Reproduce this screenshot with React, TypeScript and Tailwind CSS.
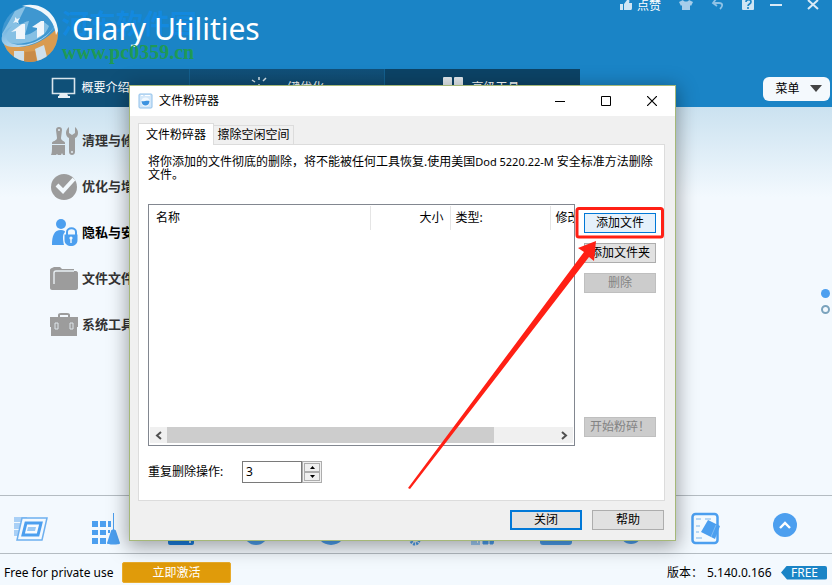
import React from 'react';

const navTabs = [
  { label: '概要介绍', icon: 'monitor' },
  { label: '一键优化', icon: 'sun' },
  { label: '高级工具', icon: 'grid' },
];

const categories = [
  { label: '清理与修复', icon: 'brush', active: false },
  { label: '优化与增强', icon: 'check', active: false },
  { label: '隐私与安全', icon: 'privacy', active: true },
  { label: '文件文件夹', icon: 'folder', active: false },
  { label: '系统工具', icon: 'case', active: false },
];

const shortcuts = [
  { label: '启动管理', icon: 'startup' },
  { label: '注册表清理', icon: 'broom' },
  { label: '磁盘清理', icon: 'drive' },
  { label: '磁盘分析', icon: 'disc' },
  { label: '快捷方式', icon: 'bigdisc' },
  { label: '进程管理', icon: 'gear' },
  { label: '内存优化', icon: 'memory' },
  { label: '驱动管理', icon: 'tray' },
  { label: '文件恢复', icon: 'smalldisc' },
  { label: '痕迹清除', icon: 'eraser' },
];

const Logo: React.FC = () => (
  <svg width="60" height="64" viewBox="0 0 60 64" aria-hidden="true">
    <defs>
      <linearGradient id="logoRing" x1="0" y1="0" x2="1" y2="1">
        <stop offset="0" stopColor="#5ba9dc" />
        <stop offset="1" stopColor="#e8f2fa" />
      </linearGradient>
      <clipPath id="logoClip">
        <circle cx="30" cy="34" r="28" />
      </clipPath>
    </defs>
    <g clipPath="url(#logoClip)">
      <rect width="60" height="64" fill="#3f97d0" />
      <path d="M0 42C20 52 42 46 60 25V64H0z" fill="#d99b50" />
      <path d="M2 34L15 11l11-5-9 18c6 1 8-3 12-3l-4 14c8-1 14-7 19-13l5 4c-5 15-27 21-47 16z" fill="#86c0e4" />
      <path d="M11 32l11-8h3v15H16v-8zM32 27l9-6h3v13l-7 4V28z" fill="#f0f6fb" />
      <path d="M14 51h10v15H14zM35 49l9-4 3 12-9 7z" fill="#cfe0ec" />
      <path d="M25 52l10-1 2 12H24z" fill="#c98b48" />
    </g>
    <path d="M22 6C40 1 57 13 58 31l-2 4C54 18 42 8 22 6z" fill="#f1f7fb" />
    <path d="M12 26C-2 34-2 46 13 47c18 1 37-9 43-24-6 14-26 25-42 21C4 42 4 34 12 26z" fill="url(#logoRing)" />
    <path d="M15 17l2 2 3-1-2 3 1 3-3-2-3 1 2-3z" fill="#e9f4fb" />
  </svg>
);

const NavIcon: React.FC<{ name: string }> = ({ name }) => (
  <svg width="26" height="24" viewBox="0 0 26 24" fill="none" className="shrink-0" aria-hidden="true">
    {name === 'monitor' && (
      <>
        <path d="M1.500 2.500h22v15h-22z" stroke="#d9e5ec" strokeWidth="1.600" />
        <path d="M9 17h7l1 3H8z" fill="#e8eff4" />
        <path d="M7 21h12" stroke="#e8eff4" strokeWidth="2" />
      </>
    )}
    {name === 'sun' && (
      <path
        d="M13 1v3M20 2l-3 3M6 4l3 2M13 8v8M1 11h4M21 11h4M5 19l3-3M21 19l-3-3"
        stroke="#d9e5ec"
        strokeWidth="1.500"
      />
    )}
    {name === 'grid' && (
      <g fill="#e2e9ed">
        <rect x="2" y="1" width="9" height="10" rx="1" />
        <rect x="13" y="1" width="9" height="10" rx="1" />
        <rect x="2" y="13" width="9" height="10" rx="1" />
        <rect x="13" y="13" width="9" height="10" rx="1" />
      </g>
    )}
  </svg>
);

const CategoryIcon: React.FC<{ name: string }> = ({ name }) => (
  <svg width="28" height="30" viewBox="0 0 28 30" className="shrink-0" aria-hidden="true">
    {name === 'brush' && (
      <g fill="#9c9c9c">
        <path d="M9 1c2 0 3 1 3 3l-1 8c0 3 4 3 4 5v1H2v-1c0-2 5-2 5-5L6 4c0-2 1-3 3-3z" />
        <path d="M2 19h13v10h-2l-1-2-1 2H8l-1-1-1 1H1c1-2 1-5 1-10z" />
        <circle cx="9" cy="4" r="1" fill="#e3edf3" />
        <path d="M19 1v6l3 2 3-2V1c4 3 4 9 0 11v14c0 4-6 4-6 0V12c-4-2-4-8 0-11z" />
        <circle cx="22" cy="26" r="1" fill="#e3edf3" />
      </g>
    )}
    {name === 'check' && (
      <>
        <circle cx="14" cy="15" r="13" fill="#9c9c9c" />
        <path d="M7 13l6 6L24 7" fill="none" stroke="#f3f9fd" strokeWidth="4" />
      </>
    )}
    {name === 'privacy' && (
      <g fill="#4c9fef">
        <circle cx="11" cy="6" r="5" />
        <path d="M2 27c0-9 2-15 9-15 3 0 4 1 4 2-3 3-2 8-1 13z" />
        <path d="M17 17v-3c0-5 9-5 9 0v3" fill="none" stroke="#4c9fef" strokeWidth="2" />
        <path d="M14.500 16.500h13V22c0 8-13 8-13 0z" />
        <circle cx="21" cy="20" r="1.600" fill="#f3f9fd" />
        <path d="M20.300 20h1.400v5h-1.400z" fill="#f3f9fd" />
      </g>
    )}
    {name === 'folder' && (
      <>
        <path d="M0 24V6c0-1 1-2 2-2l2-1h6l2 2h12v2h2c1 0 2 1 2 2v15c0 1-1 2-2 2H2c-1 0-2-1-2-2z" fill="#9c9c9c" />
        <path d="M4 20V9c0-1 1-2 2-2h18" fill="none" stroke="#e8eff3" strokeWidth="1.400" />
      </>
    )}
    {name === 'case' && (
      <>
        <path d="M9 8V5c0-1 1-1 2-1h6c1 0 2 0 2 1v3" fill="none" stroke="#9c9c9c" strokeWidth="2" />
        <path d="M0 7h28v10h-1v9H1v-9H0z" fill="#9c9c9c" />
        <path d="M5 13h3v6H5zM20 13h3v6h-3z" fill="none" stroke="#dde5ea" />
      </>
    )}
  </svg>
);

const ShortcutIcon: React.FC<{ name: string }> = ({ name }) => (
  <svg width="36" height="36" viewBox="0 0 36 36" aria-hidden="true">
    {name === 'startup' && (
      <>
        <path d="M1 6h13v5H1zM1 12h8v6H1zM1 19h5v6H1z" fill="#a9d0f6" />
        <path d="M9 7h25l-5 22H4z" fill="#f3f9fe" stroke="#6eb0ef" strokeWidth="1.500" />
        <path d="M13 12h15l-3 12H10z" fill="#f8fbfe" stroke="#4c9fef" strokeWidth="3" />
        <path d="M15 16h8l-1 4h-8z" fill="#9ac9f5" />
      </>
    )}
    {name === 'broom' && (
      <g fill="#4c9fef">
        <path d="M4 10h6v6H4zM12 10h6v6h-6zM20 10h3v6h-3zM4 19h6v5H4zM12 19h6v5h-6zM20 19h2v3h-2zM4 27h6v6H4zM12 27h6v6h-6z" />
        <path d="M25 2h1v17h-1zM23 20c0-2 5-2 5 0l4 12c1 2-14 2-13 0z" />
      </g>
    )}
    {name === 'drive' && (
      <>
        <rect x="5" y="24" width="26" height="10" rx="2" fill="#1b7fe0" />
        <circle cx="27" cy="31" r="1" fill="#fff" />
      </>
    )}
    {name === 'disc' && <circle cx="18" cy="22" r="12" fill="#4c9fef" />}
    {name === 'bigdisc' && <circle cx="18" cy="19" r="15" fill="#4c9fef" />}
    {name === 'smalldisc' && <circle cx="18" cy="22" r="11" fill="#4c9fef" />}
    {name === 'gear' && (
      <circle cx="27" cy="29" r="4" fill="none" stroke="#4c9fef" strokeWidth="3" strokeDasharray="2 1" />
    )}
    {name === 'memory' && (
      <path d="M9 28v4m2-4v4m2-4v4m3-4v4M8 33h9M20 28h5v5h-5zM27 28h4l-1 5h-3z" fill="#4c9fef" stroke="#4c9fef" />
    )}
    {name === 'tray' && <rect x="2" y="22" width="32" height="12" rx="3" fill="#4c9fef" />}
    {name === 'eraser' && (
      <>
        <rect x="4.500" y="3" width="25" height="29" rx="3" fill="#f4fafe" stroke="#4c9fef" strokeWidth="2.500" />
        <path d="M8 8h5M8 15h4M8 21h3M8 27h6M17 8h6" stroke="#b7d8f6" strokeWidth="2" />
        <path d="M20 9l12 6-5 13-14-7z" fill="#4c9fef" />
        <path d="M28 14l-5 12" stroke="#7fbcf4" />
      </>
    )}
  </svg>
);

const WindowTools: React.FC = () => (
  <div className="flex items-start">
    <button type="button" className="mr-[9px] flex items-center gap-1 text-xs leading-3 text-white">
      <svg width="14" height="12" viewBox="0 0 14 12" className="shrink-0" aria-hidden="true">
        <path d="M1 4h3v6H1zM5 4l3-4c2-1 3 0 2 3h3v5c0 2-1 2-2 2H5z" fill="#cfe5f4" />
      </svg>
      <span className="shrink-0">点赞</span>
    </button>
    <button type="button" aria-label="皮肤" className="flex w-8 justify-center">
      <svg width="14" height="12" viewBox="0 0 14 12" aria-hidden="true">
        <path d="M4 0c1 2 5 2 6 0l4 2-2 4-1-1v5H3V5L2 6 0 2z" fill="#a6cdea" />
      </svg>
    </button>
    <button type="button" aria-label="撤销" className="flex w-8 justify-center">
      <svg width="14" height="12" viewBox="0 0 14 12" aria-hidden="true">
        <path d="M5 -1L2 3l4 3M2 3h6c4 0 4 3 1 6" fill="none" stroke="#8fc2e6" strokeWidth="1.800" />
      </svg>
    </button>
    <button type="button" aria-label="帮助" className="flex w-7 justify-center">
      <svg width="14" height="12" viewBox="0 0 14 12" aria-hidden="true">
        <rect x="1" y="-3" width="12" height="13" rx="1" fill="#cfe5f4" />
        <path d="M5 2c0-3 5-3 5 0 0 2-3 2-3 4M7 7v2" fill="none" stroke="#1a84c6" strokeWidth="1.600" />
      </svg>
    </button>
    <button type="button" aria-label="最小化" className="flex w-7 justify-center">
      <svg width="14" height="12" viewBox="0 0 14 12" aria-hidden="true">
        <path d="M1 5h12" stroke="#d9eaf6" strokeWidth="2" />
      </svg>
    </button>
    <button type="button" aria-label="关闭窗口" className="ml-1 flex w-[38px] justify-center">
      <svg width="14" height="12" viewBox="0 0 14 12" aria-hidden="true">
        <path d="M2 0l10 9M12 0L2 9" stroke="#d9eaf6" strokeWidth="2" />
      </svg>
    </button>
  </div>
);

const Header: React.FC = () => (
  <header className="bg-[#1a84c6]">
    <div className="flex h-[69px] items-start justify-between">
      <div className="relative flex">
        <Logo />
        <h1 className="relative z-10 ml-3 pt-2 font-['Noto_Sans'] text-[30px] leading-[42px] font-normal text-white">
          Glary Utilities
        </h1>
        <div className="absolute top-2 left-[62px] text-[27px] leading-8 font-bold whitespace-nowrap text-[#0f8df0] opacity-60">
          河东软件园
        </div>
        <div className="absolute top-[42px] left-[62px] z-20 font-['Liberation_Serif',serif] text-[20px] leading-5 font-bold text-[#1f9a55]">
          www.pc0359.cn
        </div>
      </div>
      <WindowTools />
    </div>
    <div className="flex h-[38px] justify-between">
      <nav className="flex">
        {navTabs.map((tab, i) => (
          <a
            key={tab.label}
            href="#"
            className={
              i === 2
                ? 'flex w-[195px] items-center justify-center gap-1 bg-[#0c4366] pr-1 text-xs text-white'
                : i === 1
                  ? 'flex w-[195px] items-center justify-center gap-1 border-r border-[#13608f] bg-linear-to-b from-[#115079] to-[#0d4568] pr-1 text-xs text-white'
                  : 'flex w-[190px] items-center justify-center gap-1 border-r border-[#13608f] bg-[#0f5078] pr-2 text-xs text-white'
            }
          >
            <NavIcon name={tab.icon} />
            {tab.label}
          </a>
        ))}
      </nav>
      <button
        type="button"
        className="mt-2 mr-0.5 flex h-6 w-[67px] items-center justify-center gap-2.5 rounded-md bg-[#f4f9fd] pl-1 text-xs text-black"
      >
        菜单
        <svg width="12" height="8" viewBox="0 0 12 8" aria-hidden="true">
          <path d="M0 0h12L6 7z" fill="#444" />
        </svg>
      </button>
    </div>
  </header>
);

const SideButton: React.FC<{ label: string; disabled?: boolean; focus?: boolean }> = ({ label, disabled, focus }) => (
  <button
    type="button"
    disabled={disabled}
    className={
      focus
        ? 'h-5 w-[72px] border border-[#0078d7] bg-[#e5f1fb] text-xs leading-[18px] text-black'
        : disabled
          ? 'h-5 w-[72px] border border-[#bfbfbf] bg-[#cccccc] text-xs leading-[18px] text-[#838383]'
          : 'h-5 w-[72px] border border-[#adadad] bg-[#e1e1e1] text-xs leading-[18px] text-black'
    }
  >
    {label}
  </button>
);

const FileList: React.FC = () => (
  <div className="flex h-[242px] flex-1 flex-col overflow-hidden border border-[#828790] bg-white">
    <div className="flex-1 overflow-hidden pt-px">
      <table className="w-[500px] table-fixed text-left text-xs leading-6">
        <thead>
          <tr>
            <th className="w-[221px] border-r border-[#e5e5e5] pl-[7px] font-normal">名称</th>
            <th className="w-20 border-r border-[#e5e5e5] pr-1.5 text-right font-normal">大小</th>
            <th className="w-[100px] border-r border-[#e5e5e5] pl-[5px] font-normal">类型:</th>
            <th className="pl-[5px] font-normal whitespace-nowrap">修改时间</th>
          </tr>
        </thead>
        <tbody />
      </table>
    </div>
    <div className="mx-px mb-0.5 flex h-4 items-center justify-between bg-[#f0f0f0]">
      <button type="button" aria-label="向左" className="flex w-[17px] justify-center">
        <svg width="7" height="9" viewBox="0 0 7 9" aria-hidden="true">
          <path d="M6 1L2 4.500l4 3.500" fill="none" stroke="#505050" strokeWidth="2" />
        </svg>
      </button>
      <div className="flex h-full flex-1">
        <div className="h-full w-[84%] bg-[#cdcdcd]" />
      </div>
      <button type="button" aria-label="向右" className="flex w-[17px] justify-center">
        <svg width="7" height="9" viewBox="0 0 7 9" aria-hidden="true">
          <path d="M1 1l4 3.500-4 3.500" fill="none" stroke="#505050" strokeWidth="2" />
        </svg>
      </button>
    </div>
  </div>
);

const ShredderDialog: React.FC = () => (
  <div
    role="dialog"
    aria-label="文件粉碎器"
    className="absolute top-[85px] left-[129px] z-30 flex w-[547px] flex-col border border-[#a5b878] bg-[#f0f0f0] text-xs text-black shadow-[0_4px_18px_2px_rgba(0,0,0,0.35)]"
  >
    <div className="flex h-[30px] items-center justify-between bg-white pl-2">
      <div className="flex items-center gap-1.5">
        <svg width="15" height="16" viewBox="0 0 15 16" aria-hidden="true">
          <rect x="1" y="1" width="13" height="14" rx="1" fill="#d3e7f9" stroke="#8fc0ea" />
          <path d="M3 2.500h2M7 2.500h5" stroke="#fff" />
          <circle cx="7.500" cy="9" r="4.500" fill="#f1f8fe" />
          <path d="M3.500 8c2 1 5-1 8 0 0 6-8 6-8 0z" fill="#3d93e0" />
        </svg>
        <span>文件粉碎器</span>
      </div>
      <div className="flex">
        <button type="button" aria-label="最小化" className="flex w-[46px] justify-center">
          <svg width="10" height="10" viewBox="0 0 10 10" aria-hidden="true">
            <path d="M0 5.500h10" stroke="#000" />
          </svg>
        </button>
        <button type="button" aria-label="最大化" className="flex w-[46px] justify-center">
          <svg width="10" height="10" viewBox="0 0 10 10" fill="none" aria-hidden="true">
            <path d="M.5.5h9v9h-9z" stroke="#000" />
          </svg>
        </button>
        <button type="button" aria-label="关闭" className="flex w-[46px] justify-center">
          <svg width="10" height="10" viewBox="0 0 10 10" aria-hidden="true">
            <path d="M0 0l10 10M10 0L0 10" stroke="#000" strokeWidth="1.200" />
          </svg>
        </button>
      </div>
    </div>

    <div className="px-2 pt-[7px]">
      <div role="tablist" className="flex items-end">
        <button
          type="button"
          role="tab"
          aria-selected="true"
          className="relative -mb-px h-[22px] w-[76px] border border-b-0 border-[#dcdcdc] bg-white text-xs leading-4"
        >
          文件粉碎器
        </button>
        <button
          type="button"
          role="tab"
          aria-selected="false"
          className="h-[19px] w-20 border border-b-0 border-l-0 border-[#dcdcdc] bg-[#f0f0f0] text-xs leading-4"
        >
          擦除空闲空间
        </button>
      </div>
      <div className="mr-0.5 border border-[#dcdcdc] bg-white pr-2 pl-[9px]">
        <p className="h-[59px] pt-2.5 leading-[13px]">
          将你添加的文件彻底的删除，将不能被任何工具恢复.使用美国
          <span className="text-[11px]">Dod 5220.22-M</span> 安全标准方法删除文件。
        </p>
        <div className="flex gap-[9px]">
          <FileList />
          <div className="flex w-[72px] flex-col gap-2.5 pt-[9px] pb-[9px]">
            <SideButton label="添加文件" focus />
            <SideButton label="添加文件夹" />
            <SideButton label="删除" disabled />
            <div className="mt-auto">
              <SideButton label="开始粉碎！" disabled />
            </div>
          </div>
        </div>
        <div className="flex items-center pt-[15px] pb-[17px]">
          <label htmlFor="passes" className="w-[94px]">
            重复删除操作:
          </label>
          <input
            id="passes"
            type="text"
            defaultValue="3"
            className="h-[22px] w-[60px] border border-[#7a7a7a] bg-white pb-0.5 pl-[3px] text-xs"
          />
          <div className="flex h-[22px] w-5 flex-col border border-[#adadad] bg-[#f0f0f0] p-px">
            <button type="button" aria-label="增加" className="flex flex-1 items-center justify-center border border-[#adadad]">
              <svg width="5" height="3" viewBox="0 0 5 3" aria-hidden="true">
                <path d="M0 3h5L2.500 0z" />
              </svg>
            </button>
            <button type="button" aria-label="减少" className="flex flex-1 items-center justify-center border border-[#adadad]">
              <svg width="5" height="3" viewBox="0 0 5 3" aria-hidden="true">
                <path d="M0 0h5L2.500 3z" />
              </svg>
            </button>
          </div>
        </div>
      </div>
    </div>

    <div className="flex justify-end gap-2.5 pt-[9px] pr-[11px] pb-2.5">
      <button type="button" className="h-5 w-[72px] border-2 border-[#0078d7] bg-[#e1e1e1] text-xs leading-4">
        关闭
      </button>
      <button type="button" className="h-5 w-[72px] border border-[#adadad] bg-[#e1e1e1] text-xs leading-[18px]">
        帮助
      </button>
    </div>

    {/* callout frame and arrow on the add button */}
    <svg
      width="545"
      height="454"
      viewBox="130 86 545 454"
      className="pointer-events-none absolute top-0 left-0"
      aria-hidden="true"
    >
      <rect x="577" y="208.500" width="85.500" height="28.500" rx="2" fill="none" stroke="#ff2015" strokeWidth="3" />
      <path d="M596 241l-18 7 6 4L408 488l2 1L589 257l5 4z" fill="#ff2015" />
    </svg>
  </div>
);

export default function App() {
  return (
    <div className="relative flex min-h-screen flex-col overflow-hidden bg-[#f3f9fe] font-['Noto_Sans','Noto_Sans_CJK_SC',sans-serif]">
      <Header />

      <main className="flex flex-1 items-center justify-between bg-[linear-gradient(#cbe2f0,#f3f9fe_90px)]">
        <ul className="flex flex-col self-start pt-[11px] pl-[50px]">
          {categories.map((item) => (
            <li key={item.label}>
              <a
                href="#"
                className={
                  item.active
                    ? 'flex h-[46px] items-center gap-1 text-[13px] font-bold text-black'
                    : 'flex h-[46px] items-center gap-1 text-[13px] font-bold text-[#333]'
                }
              >
                <CategoryIcon name={item.icon} />
                {item.label}
              </a>
            </li>
          ))}
        </ul>
        <div className="flex flex-col gap-[7px] pr-0.5">
          <button type="button" aria-label="第一页" className="size-[9px] rounded-full bg-[#4c9fef]" />
          <button type="button" aria-label="第二页" className="size-[9px] rounded-full border-2 border-[#7aa3bd]" />
        </div>
      </main>

      <div className="flex h-[58px] items-center justify-between border-t border-[#b4bcc2] pr-[35px] pl-[13px]">
        <div className="flex gap-[39px]">
          {shortcuts.map((item) => (
            <button key={item.label} type="button" aria-label={item.label} className="shrink-0 pt-2">
              <ShortcutIcon name={item.icon} />
            </button>
          ))}
        </div>
        <button type="button" aria-label="展开" className="size-6 shrink-0 rounded-full bg-[#4c9fef]">
          <svg width="24" height="24" viewBox="0 0 24 24" fill="none" aria-hidden="true">
            <path d="M7 15l5-5 5 5" stroke="#fff" strokeWidth="2.400" />
          </svg>
        </button>
      </div>

      <footer className="flex h-8 items-center justify-between border-t border-[#b4bcc2] pt-1.5 pr-[5px] pl-1 text-xs text-black">
        <div className="flex items-center">
          <span className="w-[118px] whitespace-nowrap">Free for private use</span>
          <button type="button" className="h-[21px] w-[109px] rounded-xs border border-[#e8ab2c] bg-[#e09b0a] text-xs leading-4 text-white">
            立即激活
          </button>
        </div>
        <div className="flex items-center">
          <span className="w-10">版本：</span>
          <span className="w-[74px]">5.140.0.166</span>
          <span className="h-3.5 w-[46px] rounded-xs bg-[#1a84c6] pl-2.5 leading-[14px] text-white [clip-path:polygon(0_50%,6px_0,100%_0,100%_100%,6px_100%)]">
            FREE
          </span>
        </div>
      </footer>

      <ShredderDialog />
    </div>
  );
}
